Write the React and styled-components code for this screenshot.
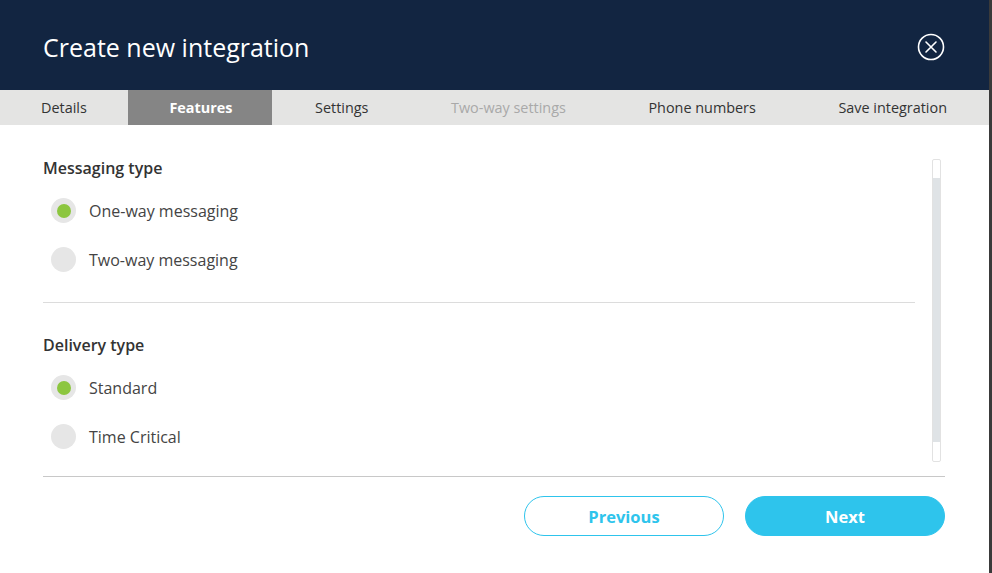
import React, { useState } from 'react';
import styled, { createGlobalStyle } from 'styled-components';

const GlobalStyle = createGlobalStyle`
  html, body {
    margin: 0;
    padding: 0;
    background: #3a3a3a;
    font-family: 'Open Sans', 'Liberation Sans', sans-serif;
  }
  * { box-sizing: border-box; }
`;

const Modal = styled.div`
  width: 989px;
  height: 573px;
  background: #ffffff;
  display: flex;
  flex-direction: column;
`;

const Header = styled.div`
  height: 90px;
  background: #122541;
  display: flex;
  align-items: center;
  justify-content: space-between;
  padding: 3px 44px 0 43px;
`;

const Title = styled.h1`
  margin: 0;
  font-size: 25px;
  font-weight: 400;
  color: #ffffff;
`;

const CloseButton = styled.button`
  width: 28px;
  height: 28px;
  padding: 0;
  border: none;
  background: transparent;
  cursor: pointer;
  display: flex;
`;

const Tabs = styled.div`
  height: 35px;
  background: #e4e4e3;
  display: flex;
  justify-content: space-between;
  padding-right: 2px;
`;

const Tab = styled.div`
  padding: 0 40px 0 41px;
  display: flex;
  align-items: center;
  font-size: 14.4px;
  font-weight: ${(p) => (p.$active ? 700 : 400)};
  color: ${(p) => (p.$active ? '#ffffff' : p.$disabled ? '#a9a9a9' : '#333333')};
  background: ${(p) => (p.$active ? '#858585' : 'transparent')};
  white-space: nowrap;
`;

const Body = styled.div`
  padding: 34px 44px 0 43px;
  display: flex;
  flex-direction: column;
`;

const ScrollArea = styled.div`
  height: 303px;
  display: flex;
  gap: 17px;
`;

const Content = styled.div`
  flex: 1;
`;

const Scrollbar = styled.div`
  width: 9px;
  margin-right: 4px;
  border: 1px solid #e2e2e2;
  border-radius: 2px;
  padding: 18px 0 19px;
  display: flex;
`;

const Thumb = styled.div`
  flex: 1;
  background: #dfe3e6;
`;

const GroupTitle = styled.div`
  font-size: 16px;
  line-height: 20px;
  font-weight: 600;
  color: #333333;
  margin-top: -1px;
`;

const Options = styled.div`
  display: flex;
  flex-direction: column;
  gap: 24px;
  margin-top: 20px;
`;

const Option = styled.label`
  display: flex;
  align-items: center;
  gap: 13px;
  padding-left: 8px;
  font-size: 16px;
  color: #444444;
  cursor: pointer;
`;

const Radio = styled.span`
  width: 25px;
  height: 25px;
  border-radius: 50%;
  background: #e6e6e6;
  display: flex;
  align-items: center;
  justify-content: center;

  &::after {
    content: '';
    width: 14px;
    height: 14px;
    border-radius: 50%;
    background: ${(p) => (p.$checked ? '#8cc63f' : 'transparent')};
  }
`;

const Divider = styled.hr`
  border: none;
  border-top: 1px solid #dcdcdc;
  margin: 30px 0 33px;
`;

const FooterLine = styled.hr`
  border: none;
  border-top: 1px solid #c8c8c8;
  margin: 14px 0 0;
`;

const Footer = styled.div`
  display: flex;
  justify-content: flex-end;
  gap: 21px;
  padding-top: 19px;
`;

const Button = styled.button`
  width: 200px;
  height: 40px;
  border-radius: 20px;
  border: 1px solid #2ec4ec;
  background: ${(p) => (p.$primary ? '#2ec4ec' : '#ffffff')};
  color: ${(p) => (p.$primary ? '#ffffff' : '#2ec4ec')};
  font-family: 'Open Sans', 'Liberation Sans', sans-serif;
  font-size: 16.5px;
  font-weight: 700;
  cursor: pointer;
`;

const CloseIcon = () => (
  <svg width="28" height="28" viewBox="0 0 28 28" fill="none">
    <circle cx="14" cy="14" r="12.5" stroke="#ffffff" strokeWidth="1.6" />
    <path d="M9 9 L19 19 M19 9 L9 19" stroke="#ffffff" strokeWidth="1.6" strokeLinecap="round" />
  </svg>
);

const tabs = [
  { label: 'Details' },
  { label: 'Features', active: true },
  { label: 'Settings' },
  { label: 'Two-way settings', disabled: true },
  { label: 'Phone numbers' },
  { label: 'Save integration' },
];

const RadioGroup = ({ title, options, value, onChange }) => (
  <div>
    <GroupTitle>{title}</GroupTitle>
    <Options>
      {options.map((opt) => (
        <Option key={opt} onClick={() => onChange(opt)}>
          <Radio $checked={value === opt} />
          {opt}
        </Option>
      ))}
    </Options>
  </div>
);

const App = () => {
  const [messaging, setMessaging] = useState('One-way messaging');
  const [delivery, setDelivery] = useState('Standard');

  return (
    <>
      <GlobalStyle />
      <Modal>
        <Header>
          <Title>Create new integration</Title>
          <CloseButton aria-label="Close">
            <CloseIcon />
          </CloseButton>
        </Header>
        <Tabs>
          {tabs.map((t) => (
            <Tab key={t.label} $active={t.active} $disabled={t.disabled}>
              {t.label}
            </Tab>
          ))}
        </Tabs>
        <Body>
          <ScrollArea>
            <Content>
              <RadioGroup
                title="Messaging type"
                options={['One-way messaging', 'Two-way messaging']}
                value={messaging}
                onChange={setMessaging}
              />
              <Divider />
              <RadioGroup
                title="Delivery type"
                options={['Standard', 'Time Critical']}
                value={delivery}
                onChange={setDelivery}
              />
            </Content>
            <Scrollbar>
              <Thumb />
            </Scrollbar>
          </ScrollArea>
          <FooterLine />
          <Footer>
            <Button>Previous</Button>
            <Button $primary>Next</Button>
          </Footer>
        </Body>
      </Modal>
    </>
  );
};

export default App;
